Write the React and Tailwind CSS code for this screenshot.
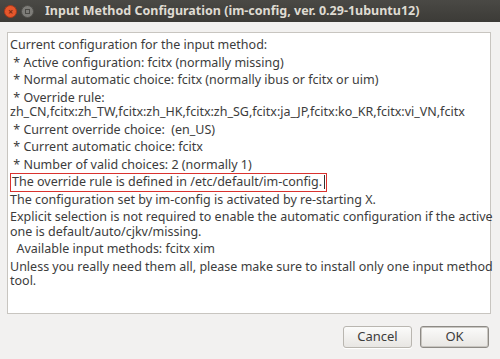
import React from "react";

const lines = [
  ["Current configuration for the input method:"],
  [" * Active configuration: fcitx (normally missing)"],
  [" * Normal automatic choice: fcitx (normally ibus or fcitx or uim)"],
  [" * Override rule:", "zh_CN,fcitx:zh_TW,fcitx:zh_HK,fcitx:zh_SG,fcitx:ja_JP,fcitx:ko_KR,fcitx:vi_VN,fcitx"],
  [" * Current override choice:  (en_US)"],
  [" * Current automatic choice: fcitx"],
  [" * Number of valid choices: 2 (normally 1)"],
];

const after = [
  ["The configuration set by im-config is activated by re-starting X."],
  [
    "Explicit selection is not required to enable the automatic configuration if the active",
    "one is default/auto/cjkv/missing.",
  ],
  ["  Available input methods: fcitx xim"],
  ["Unless you really need them all, please make sure to install only one input method", "tool."],
];

const Para = ({ rows }) => (
  <div className="whitespace-pre">
    {rows.map((r, i) => (
      <div key={i} className="leading-[14.5px]">
        {r}
      </div>
    ))}
  </div>
);

const App = () => {
  return (
    <div
      className="w-[500px] h-[359px] flex flex-col bg-[#f2f1f0] overflow-hidden"
      style={{ fontFamily: "'Noto Sans', 'Open Sans', sans-serif" }}
    >
      {/* Title bar */}
      <div className="h-[22px] flex items-center bg-gradient-to-b from-[#4a4945] to-[#3c3b37] pl-[4px]">
        <div className="w-[13px] h-[13px] rounded-full bg-[#e5572c] border border-[#a8391b] flex items-center justify-center text-[9px] leading-none font-bold text-[#7a2a12]">
          ×
        </div>
        <div className="w-[13px] h-[13px] rounded-full bg-[#7d7c78] border border-[#4f4e4a] ml-[4px] flex items-center justify-center">
          <div className="w-[5px] h-[5px] border border-[#4a4945]" />
        </div>
        <div className="ml-[11px] text-[12.5px] font-bold text-[#dfdbd2]">
          Input Method Configuration (im-config, ver. 0.29-1ubuntu12)
        </div>
      </div>

      {/* Message area */}
      <div className="mx-[7px] mt-[10px] h-[282px] w-[484px] bg-white border border-[#c8c5c0] pl-[2px] pt-[5px] text-[12.5px] text-[#3c3c3c] flex flex-col gap-[3px]">
        {lines.map((rows, i) => (
          <Para key={i} rows={rows} />
        ))}
        <div className="flex items-center -my-[2px]">
          <div className="border border-[#d9322f] px-[1px] leading-[16.5px] flex items-center">
            The override rule is defined in /etc/default/im-config.
            <span className="ml-[2px] w-px h-[14px] bg-[#333]" />
          </div>
        </div>
        {after.map((rows, i) => (
          <Para key={i} rows={rows} />
        ))}
      </div>

      {/* Buttons */}
      <div className="flex justify-end gap-[8px] pr-[11px] mt-[12px]">
        <button className="w-[69px] h-[22px] rounded-[3px] border border-[#b9b6b0] bg-gradient-to-b from-[#fbfbfa] to-[#e8e6e3] text-[13px] text-[#3c3c3c] shadow-[0_1px_0_#fff]">
          Cancel
        </button>
        <button className="w-[69px] h-[22px] rounded-[3px] border border-[#8d8a85] bg-gradient-to-b from-[#fbfbfa] to-[#e8e6e3] text-[13px] text-[#3c3c3c] shadow-[inset_0_0_0_1px_#c9c6c1]">
          OK
        </button>
      </div>
    </div>
  );
};

export default App;
